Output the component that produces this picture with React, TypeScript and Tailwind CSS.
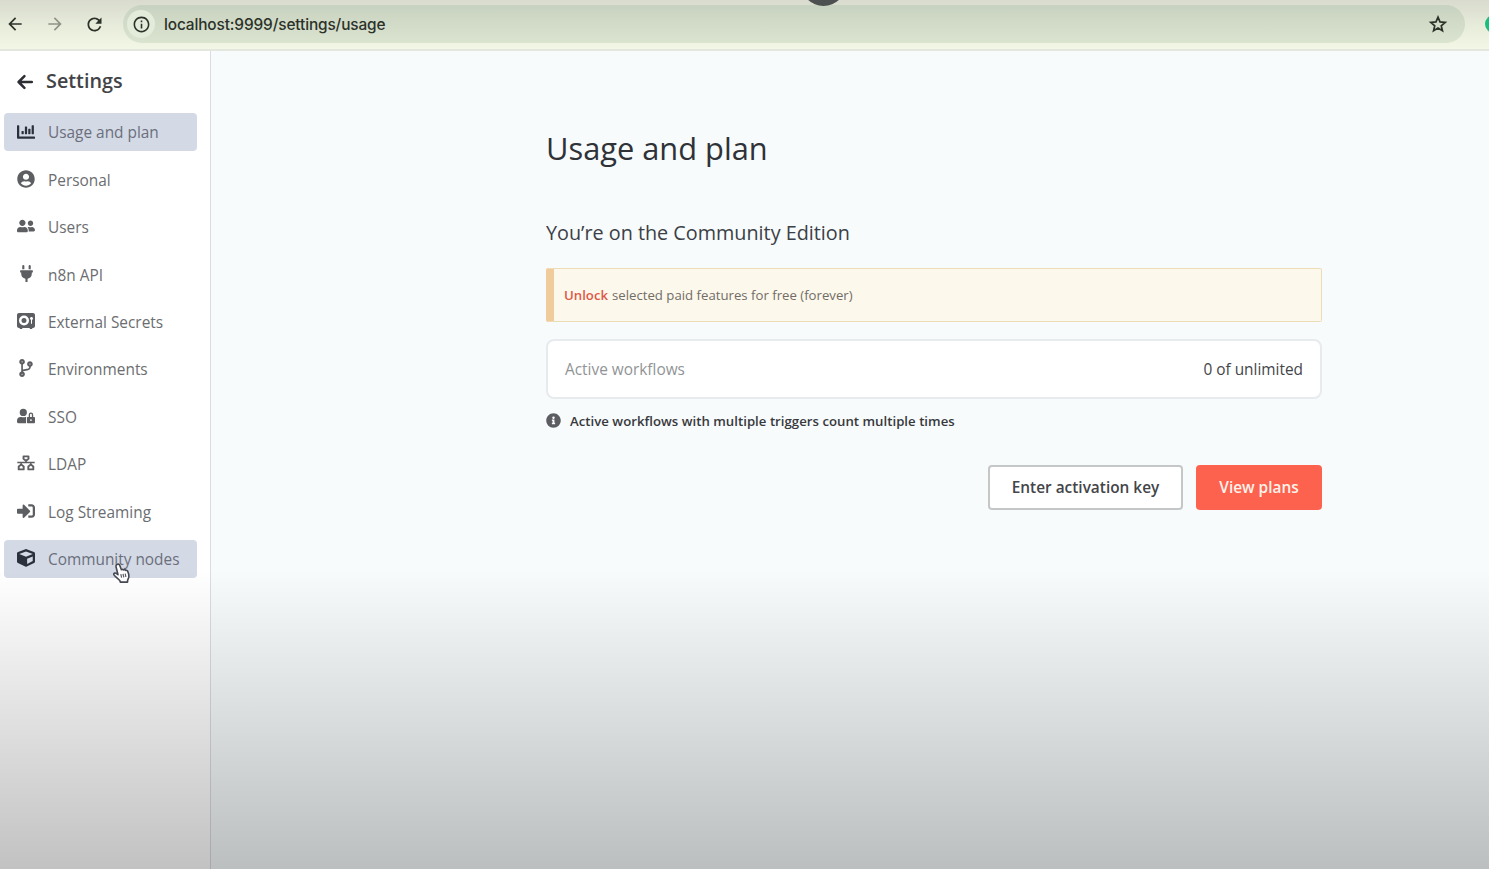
import type { ReactNode } from "react";
import { FaChartBar, FaUserCircle, FaUserFriends, FaPlug, FaCodeBranch, FaUserLock, FaSignInAlt, FaCube, FaInfoCircle } from "react-icons/fa";
import { FaVault } from "react-icons/fa6";
import { MdArrowBack, MdArrowForward, MdRefresh, MdInfoOutline } from "react-icons/md";

function StarIcon() {
  return (
    <svg width="20" height="20" viewBox="0 0 20 20" fill="none" stroke="currentColor" strokeWidth="1.7">
      <path d="M10 3.1l2 4.8 5.2.45-3.95 3.4 1.2 5.05L10 14.1l-4.45 2.7 1.2-5.05L2.8 8.35 8 7.9z" />
    </svg>
  );
}

function NetworkIcon() {
  return (
    <svg width="18" height="16" viewBox="0 0 18 16" fill="none" stroke="currentColor" strokeWidth="1.9">
      <path d="M6.5 1.4h5v2.4L9 5.8 6.5 3.8z" strokeLinejoin="round" />
      <path d="M1.7 11.4l2.5-1.8 2.5 1.8v3H1.7zM11.3 11.4l2.5-1.8 2.5 1.8v3h-5z" strokeLinejoin="round" />
      <path d="M9 5v2.8M0.3 7.5h17.4M4.2 7.5v2.4M13.8 7.5v2.4" strokeWidth="1.4" />
    </svg>
  );
}

function HandCursor() {
  return (
    <svg className="absolute left-[108px] top-[22px]" width="19" height="23" viewBox="0 0 19 23">
      <path
        d="M5.2 2.4c1-.7 2.1-.1 2.5.9l1.7 4.4c.7-.5 1.6-.4 2.1.2.8-.5 1.7-.3 2.2.5.8-.3 1.8 0 2.1 1l.9 2.8c.4 1.7.3 3.1-.5 4.6l-.6 1.6v1.7H8.3l-.5-1.6-4.5-4.1c-.9-.8-2-1.7-1.6-2.6.6-1.1 2-.8 2.9-.1l1.4 1L4 4.7c-.3-.9.4-1.8 1.2-2.3z"
        fill="#fff"
        stroke="#444851"
        strokeWidth="1.6"
        strokeLinejoin="round"
      />
      <path d="M8.8 12.2l.8 3.4M11 11.9l.8 3.4M13.2 11.6l.7 3.4" stroke="#555962" strokeWidth="1.2" />
    </svg>
  );
}

type Item = { label: string; icon: ReactNode; active?: boolean };

const items: Item[] = [
  { label: "Usage and plan", icon: <FaChartBar size={18} />, active: true },
  { label: "Personal", icon: <FaUserCircle size={18} /> },
  { label: "Users", icon: <FaUserFriends size={18} /> },
  { label: "n8n API", icon: <FaPlug size={17} /> },
  { label: "External Secrets", icon: <FaVault size={18} /> },
  { label: "Environments", icon: <FaCodeBranch size={18} /> },
  { label: "SSO", icon: <FaUserLock size={18} /> },
  { label: "LDAP", icon: <NetworkIcon /> },
  { label: "Log Streaming", icon: <FaSignInAlt size={18} /> },
  { label: "Community nodes", icon: <FaCube size={18} />, active: true },
];

function BrowserBar() {
  return (
    <header className="relative flex h-[51px] shrink-0 items-start overflow-hidden border-b-2 border-[#e3e7dd] bg-linear-to-b from-[#d8dbcd] via-[#e7ebda] to-[#f3f8e6] pt-[5px] text-[#2c3129]">
      <div className="flex h-[38px] w-[123px] shrink-0 items-center">
        <MdArrowBack size={20} className="ml-[5px]" />
        <MdArrowForward size={20} className="ml-[20px] text-[#8f9488]" />
        <MdRefresh size={21} className="ml-[19px]" />
      </div>
      <div className="flex h-[38px] w-[1342px] shrink-0 items-center rounded-full bg-linear-to-b from-[#c8d2c0] to-[#dae4cf] pl-[4px] pr-[17px]">
        <span className="flex size-[28px] items-center justify-center rounded-full bg-[#e3ebdb]">
          <MdInfoOutline size={19} />
        </span>
        <span className="ml-[9px] grow pt-px font-['Inter'] text-[15.4px] font-medium tracking-[-0.12px]">localhost:9999/settings/usage</span>
        <StarIcon />
      </div>
      <span className="absolute left-[801px] top-[-39px] size-[45px] rounded-full bg-[#4d5051]" />
      <span className="absolute left-[1485px] top-[15px] size-[18px] rounded-full bg-[#19bd7c]" />
    </header>
  );
}

function Sidebar() {
  return (
    <aside className="w-[211px] shrink-0 border-r border-[#d9dce3] bg-white pl-[4px]">
      <div className="flex h-[62px] items-center pl-[13px] text-[#2d2e33]">
        <svg width="16" height="16" viewBox="0 0 16 16" fill="none" stroke="currentColor" strokeWidth="2.5" strokeLinecap="round" strokeLinejoin="round">
          <path d="M14.8 8H1.9M7.4 2.2L1.6 8l5.8 5.8" />
        </svg>
        <span className="ml-[13px] pb-[2px] text-[19.8px] font-semibold text-[#424347]">Settings</span>
      </div>
      <nav className="flex flex-col gap-[9.4px]">
        {items.map((it) => (
          <div
            key={it.label}
            className={
              it.active
                ? "relative flex h-[38px] w-[193px] items-center rounded-[4px] bg-[#d4d9e6] text-[#2b303d]"
                : "relative flex h-[38px] w-[193px] items-center text-[#5c5e62]"
            }
          >
            <span className="ml-[13px] flex w-[18px] justify-center pb-px">{it.icon}</span>
            <span className={it.active ? "ml-[13px] pt-[2px] text-[15.4px] text-[#6a6f7b]" : "ml-[13px] pt-[2px] text-[15.4px] text-[#6b6d70]"}>{it.label}</span>
            {it.label === "Community nodes" && <HandCursor />}
          </div>
        ))}
      </nav>
    </aside>
  );
}

export default function App() {
  return (
    <div className="relative flex h-[869px] w-[1489px] flex-col overflow-hidden font-['Open_Sans',sans-serif]">
      <BrowserBar />
      <div className="flex min-h-0 grow">
        <Sidebar />
        <main className="grow bg-[#f7fbfc] pl-[335px] pt-[74px] text-[#2f3237]">
          <div className="flex w-[776px] flex-col">
            <h1 className="h-[46px] text-[30.8px] leading-[46px]">Usage and plan</h1>
            <h2 className="mt-[47px] h-[30px] text-[19.8px] leading-[30px] text-[#3c4046]">You’re on the Community Edition</h2>
            <div className="mt-[20px] flex h-[54px] items-center rounded-[2px] border border-l-8 border-[#ecdcb8] border-l-[#f0cb9b] bg-[#fdf8ec] pl-[10px] pt-[2px] text-[13.2px] text-[#716d66]">
              <span className="font-semibold text-[#de5847]">Unlock</span>
              <span className="ml-[4px]">selected paid features for free (forever)</span>
            </div>
            <div className="mt-[17px] flex h-[60px] items-center justify-between rounded-[8px] border-2 border-[#e8ebed] bg-white px-[17px] pt-px text-[15.4px]">
              <span className="text-[#919496]">Active workflows</span>
              <span className="text-[#434549]">0 of unlimited</span>
            </div>
            <div className="mt-[12px] flex h-[20px] items-center text-[13.2px] font-semibold text-[#37393d]">
              <FaInfoCircle size={15} className="mb-[2px] text-[#5b5d60]" />
              <span className="ml-[9px] pt-px tracking-[0.02px]">Active workflows with multiple triggers count multiple times</span>
            </div>
            <div className="mt-[34px] flex justify-end gap-[13px] text-[15.4px] font-semibold">
              <button className="h-[45px] w-[195px] rounded-[4px] border-2 border-[#c4c6c8] bg-white pt-px text-[#434549]">Enter activation key</button>
              <button className="h-[45px] w-[126px] rounded-[4px] bg-[#fd624e] pt-px text-[#fff3ec]">View plans</button>
            </div>
          </div>
        </main>
      </div>
      <div className="pointer-events-none absolute inset-x-0 bottom-0 h-[299px] bg-linear-to-b from-black/0 to-black/24" />
    </div>
  );
}
